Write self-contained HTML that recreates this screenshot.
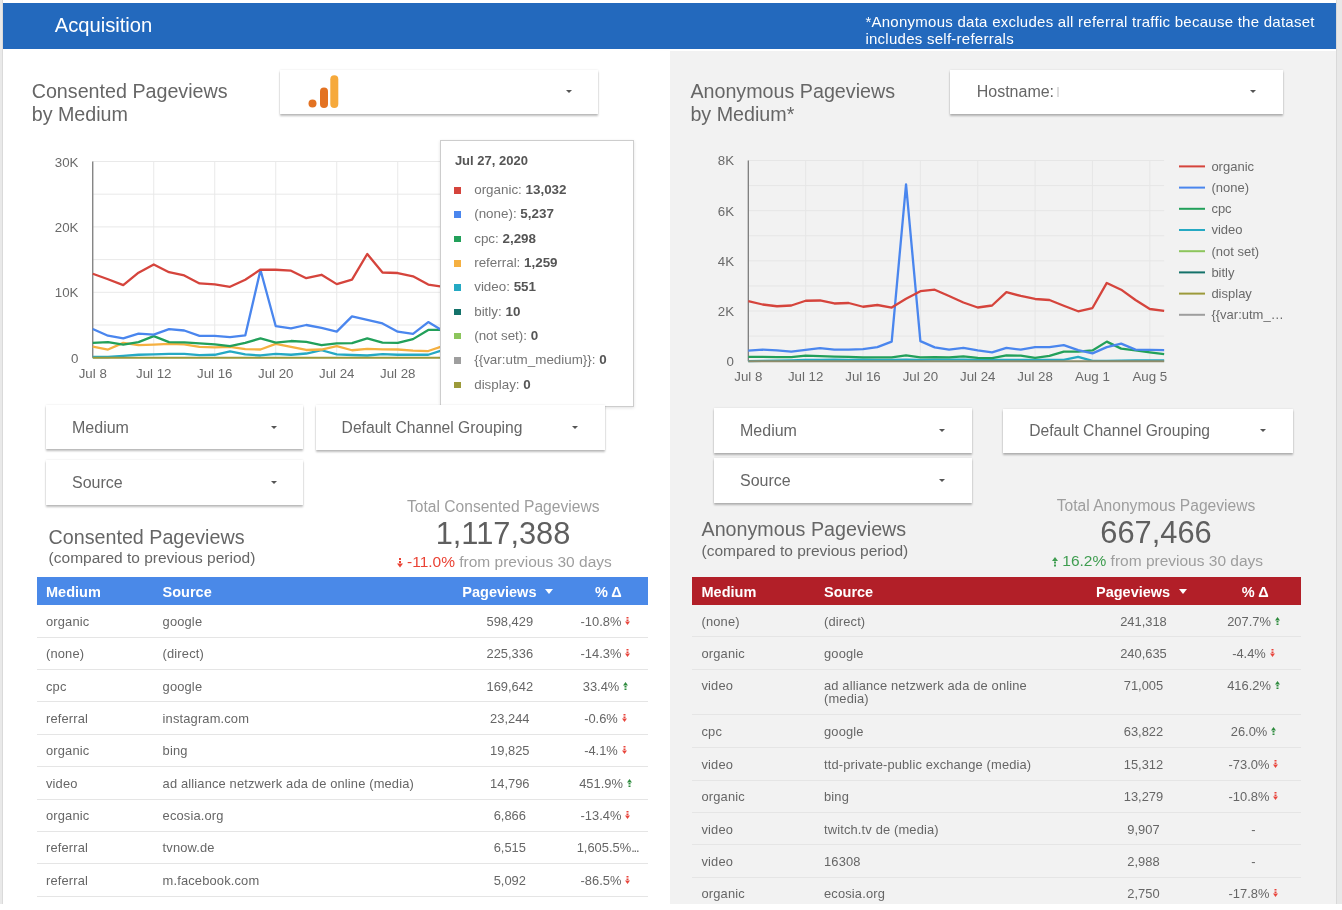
<!DOCTYPE html>
<html><head><meta charset="utf-8"><style>
*{box-sizing:border-box;margin:0;padding:0}
html,body{width:1342px;height:910px;overflow:hidden;background:#fff;font-family:"Liberation Sans",sans-serif;position:relative}
#root{position:absolute;left:0;top:0;width:1342px;height:910px;will-change:transform}
.abs{position:absolute}
.t{position:absolute;white-space:nowrap;line-height:1}
.dd{position:absolute;background:#fff;box-shadow:0 1.5px 2px rgba(0,0,0,.26),0 0 2px rgba(0,0,0,.10)}
.ddl{position:absolute;top:calc(50% + 0.7px);transform:translateY(-50%);font-size:16px;color:#666;white-space:nowrap;line-height:1}
.caret{position:absolute;width:0;height:0;border-left:3.5px solid transparent;border-right:3.5px solid transparent;border-top:3.7px solid #555}
.thead{position:absolute;height:28.7px;color:#fff;font-weight:bold;font-size:14.5px}
.thead span{position:absolute;top:8px;line-height:1;white-space:nowrap}
.hcaret{position:absolute;top:12px;width:0;height:0;border-left:4px solid transparent;border-right:4px solid transparent;border-top:5px solid #fff}
.trow{position:absolute;border-bottom:1px solid #e5e5e5}
.c{position:absolute;top:10.5px;font-size:12.9px;color:#666;line-height:1;white-space:nowrap}
.num{text-align:center}
.src{letter-spacing:0.15px}
.arr{position:absolute}
</style></head><body><div id="root">
<div class="abs" style="left:0;top:0;width:3px;height:904px;background:#e9e9e9"></div>
<div class="abs" style="left:2px;top:0;width:1px;height:904px;background:#dadada"></div>
<div class="abs" style="left:1336px;top:0;width:6px;height:904px;background:#e8e8e8"></div>
<div class="abs" style="left:1336px;top:0;width:1px;height:904px;background:#d9d9d9"></div>
<div class="abs" style="left:670px;top:51px;width:666px;height:853px;background:#f2f2f2"></div>
<div class="abs" style="left:3px;top:3px;width:1333px;height:46px;background:#2369bd"></div>
<div class="t" style="left:54.7px;top:15px;font-size:20.2px;color:#fff">Acquisition</div>
<div class="t" style="left:865.4px;top:12.7px;font-size:15px;line-height:17.7px;color:#fff;letter-spacing:0.26px">*Anonymous data excludes all referral traffic because the dataset<br>includes self-referrals</div>

<!-- LEFT -->
<div class="t" style="left:31.7px;top:80px;font-size:19.7px;line-height:23.2px;color:#666">Consented Pageviews<br>by Medium</div>
<div class="dd" style="left:280px;top:69.5px;width:318px;height:44.5px"><div class="caret" style="left:286.0px;top:20.75px"></div></div>
<svg class="abs" style="left:308px;top:74px" width="32" height="35"><circle cx="4.5" cy="29.5" r="4" fill="#e37222"/><rect x="12" y="13.5" width="8" height="20.5" rx="4" fill="#e37222"/><rect x="22.3" y="1.2" width="8" height="32.8" rx="4" fill="#f6a93b"/></svg>
<svg style="position:absolute;left:0;top:0" width="670" height="420"><g stroke="#e9e9e9" stroke-width="1"><line x1="92.75" y1="357.70" x2="535.00" y2="357.70"/><line x1="92.75" y1="325.00" x2="535.00" y2="325.00"/><line x1="92.75" y1="292.30" x2="535.00" y2="292.30"/><line x1="92.75" y1="259.60" x2="535.00" y2="259.60"/><line x1="92.75" y1="226.90" x2="535.00" y2="226.90"/><line x1="92.75" y1="194.20" x2="535.00" y2="194.20"/><line x1="92.75" y1="161.50" x2="535.00" y2="161.50"/><line x1="92.75" y1="161.50" x2="92.75" y2="357.7"/><line x1="153.75" y1="161.50" x2="153.75" y2="357.7"/><line x1="214.75" y1="161.50" x2="214.75" y2="357.7"/><line x1="275.75" y1="161.50" x2="275.75" y2="357.7"/><line x1="336.75" y1="161.50" x2="336.75" y2="357.7"/><line x1="397.75" y1="161.50" x2="397.75" y2="357.7"/><line x1="458.75" y1="161.50" x2="458.75" y2="357.7"/><line x1="519.75" y1="161.50" x2="519.75" y2="357.7"/></g><line x1="92.75" y1="161.50" x2="92.75" y2="357.7" stroke="#757575" stroke-width="1.2"/><polyline fill="none" stroke="#25a9c3" stroke-width="2.3" stroke-linejoin="round" points="92.75,356.98 108.00,356.98 123.25,355.93 138.50,354.76 153.75,354.43 169.00,353.97 184.25,353.97 199.50,355.15 214.75,354.76 230.00,351.49 245.25,354.43 260.50,355.48 275.75,353.97 291.00,354.76 306.25,353.51 321.50,350.24 336.75,354.43 352.00,355.02 367.25,355.48 382.50,354.10 397.75,354.76 413.00,354.76 428.25,354.76 443.50,349.85 458.75,352.47 474.00,353.78 489.25,354.43 504.50,354.43 519.75,354.43 535.00,354.43"/><polyline fill="none" stroke="#f5b041" stroke-width="2.3" stroke-linejoin="round" points="92.75,346.58 108.00,349.52 123.25,342.85 138.50,345.08 153.75,344.62 169.00,343.90 184.25,344.29 199.50,346.84 214.75,347.30 230.00,346.97 245.25,349.20 260.50,349.52 275.75,343.90 291.00,346.97 306.25,349.98 321.50,349.52 336.75,346.12 352.00,350.24 367.25,348.81 382.50,349.46 397.75,349.52 413.00,350.70 428.25,351.03 443.50,345.80 458.75,347.89 474.00,348.54 489.25,349.20 504.50,349.85 519.75,349.20 535.00,349.85"/><polyline fill="none" stroke="#22a05a" stroke-width="2.3" stroke-linejoin="round" points="92.75,342.85 108.00,342.07 123.25,344.62 138.50,342.07 153.75,336.12 169.00,342.07 184.25,342.40 199.50,343.31 214.75,344.29 230.00,346.12 245.25,342.85 260.50,338.41 275.75,342.53 291.00,341.02 306.25,341.81 321.50,345.08 336.75,343.31 352.00,343.12 367.25,338.41 382.50,342.66 397.75,342.85 413.00,339.13 428.25,329.90 443.50,329.90 458.75,331.54 474.00,332.85 489.25,334.81 504.50,334.16 519.75,335.46 535.00,336.77"/><polyline fill="none" stroke="#4a86ee" stroke-width="2.3" stroke-linejoin="round" points="92.75,328.99 108.00,335.73 123.25,338.41 138.50,333.63 153.75,334.68 169.00,329.19 184.25,330.49 199.50,335.86 214.75,335.86 230.00,337.16 245.25,335.40 260.50,270.06 275.75,326.18 291.00,328.27 306.25,325.00 321.50,327.94 336.75,331.67 352.00,316.37 367.25,319.77 382.50,323.43 397.75,331.67 413.00,333.89 428.25,322.06 443.50,331.21 458.75,328.27 474.00,330.23 489.25,331.54 504.50,329.58 519.75,330.89 535.00,331.54"/><polyline fill="none" stroke="#d5443c" stroke-width="2.3" stroke-linejoin="round" points="92.75,273.73 108.00,279.22 123.25,285.17 138.50,272.68 153.75,264.50 169.00,272.22 184.25,275.49 199.50,283.41 214.75,284.45 230.00,286.81 245.25,279.68 260.50,269.54 275.75,269.74 291.00,270.72 306.25,278.17 321.50,274.77 336.75,284.12 352.00,279.68 367.25,253.98 382.50,272.48 397.75,273.01 413.00,276.28 428.25,284.58 443.50,286.87 458.75,282.49 474.00,279.22 489.25,275.95 504.50,279.22 519.75,282.49 535.00,285.76"/><line x1="92.75" y1="357.7" x2="535.00" y2="357.7" stroke="#9c9a3a" stroke-width="2"/><g font-family="Liberation Sans" font-size="13.3" fill="#6a6a6a"><text x="78.5" y="166.50" text-anchor="end">30K</text><text x="78.5" y="231.90" text-anchor="end">20K</text><text x="78.5" y="297.30" text-anchor="end">10K</text><text x="78.5" y="362.70" text-anchor="end">0</text><text x="92.75" y="377.7" text-anchor="middle">Jul 8</text><text x="153.75" y="377.7" text-anchor="middle">Jul 12</text><text x="214.75" y="377.7" text-anchor="middle">Jul 16</text><text x="275.75" y="377.7" text-anchor="middle">Jul 20</text><text x="336.75" y="377.7" text-anchor="middle">Jul 24</text><text x="397.75" y="377.7" text-anchor="middle">Jul 28</text><text x="458.75" y="377.7" text-anchor="middle">Aug 1</text><text x="519.75" y="377.7" text-anchor="middle">Aug 5</text></g></svg>
<div class="abs" style="left:439.9px;top:139.6px;width:194.4px;height:267px;background:#fff;border:1px solid #cdcdcd;box-shadow:0 1px 3px rgba(0,0,0,.12)"></div>
<div class="t" style="left:454.9px;top:153.8px;font-size:13px;font-weight:bold;color:#555">Jul 27, 2020</div>
<div class="abs" style="left:454.4px;top:187.10px;width:6.5px;height:6.5px;background:#d5443c"></div><div class="t" style="left:474.2px;top:183.10px;font-size:13.4px;color:#757575">organic: <b style="color:#555">13,032</b></div><div class="abs" style="left:454.4px;top:211.40px;width:6.5px;height:6.5px;background:#4a86ee"></div><div class="t" style="left:474.2px;top:207.40px;font-size:13.4px;color:#757575">(none): <b style="color:#555">5,237</b></div><div class="abs" style="left:454.4px;top:235.70px;width:6.5px;height:6.5px;background:#22a05a"></div><div class="t" style="left:474.2px;top:231.70px;font-size:13.4px;color:#757575">cpc: <b style="color:#555">2,298</b></div><div class="abs" style="left:454.4px;top:260.00px;width:6.5px;height:6.5px;background:#f5b041"></div><div class="t" style="left:474.2px;top:256.00px;font-size:13.4px;color:#757575">referral: <b style="color:#555">1,259</b></div><div class="abs" style="left:454.4px;top:284.30px;width:6.5px;height:6.5px;background:#25a9c3"></div><div class="t" style="left:474.2px;top:280.30px;font-size:13.4px;color:#757575">video: <b style="color:#555">551</b></div><div class="abs" style="left:454.4px;top:308.60px;width:6.5px;height:6.5px;background:#14726a"></div><div class="t" style="left:474.2px;top:304.60px;font-size:13.4px;color:#757575">bitly: <b style="color:#555">10</b></div><div class="abs" style="left:454.4px;top:332.90px;width:6.5px;height:6.5px;background:#8cc55c"></div><div class="t" style="left:474.2px;top:328.90px;font-size:13.4px;color:#757575">(not set): <b style="color:#555">0</b></div><div class="abs" style="left:454.4px;top:357.20px;width:6.5px;height:6.5px;background:#9e9e9e"></div><div class="t" style="left:474.2px;top:353.20px;font-size:13.4px;color:#757575">{{var:utm_medium}}: <b style="color:#555">0</b></div><div class="abs" style="left:454.4px;top:381.50px;width:6.5px;height:6.5px;background:#9c9a3a"></div><div class="t" style="left:474.2px;top:377.50px;font-size:13.4px;color:#757575">display: <b style="color:#555">0</b></div>
<div class="dd" style="left:46px;top:405px;width:257px;height:44px"><span class="ddl" style="left:26px">Medium</span><div class="caret" style="left:224.5px;top:20.5px"></div></div>
<div class="dd" style="left:315.6px;top:405px;width:289.69999999999993px;height:44.5px"><span class="ddl" style="left:26px;font-size:15.65px">Default Channel Grouping</span><div class="caret" style="left:256.69999999999993px;top:20.75px"></div></div>
<div class="dd" style="left:46px;top:460px;width:257px;height:44.5px"><span class="ddl" style="left:26px">Source</span><div class="caret" style="left:224.5px;top:20.75px"></div></div>
<div class="t" style="left:48.6px;top:528px;font-size:19.7px;color:#666">Consented Pageviews</div>
<div class="t" style="left:48.6px;top:550px;font-size:15.5px;color:#666">(compared to previous period)</div>
<div class="t" style="left:407px;top:499px;width:190px;text-align:center;font-size:15.6px;color:#9e9e9e">Total Consented Pageviews</div>
<div class="t" style="left:403px;top:519px;width:200px;text-align:center;font-size:30.8px;color:#5f5f5f">1,117,388</div>
<div class="t" style="left:396.7px;top:553.8px;font-size:15.5px;color:#9e9e9e"><svg width="6" height="10" style="vertical-align:-1px"><rect x="2" y="0" width="2" height="2" fill="#ea4335"/><rect x="2" y="3" width="2" height="2" fill="#ea4335"/><path d="M0 5.5 L6 5.5 L3 9.5 Z" fill="#ea4335"/></svg> <span style="color:#ea4335">-11.0%</span> from previous 30 days</div>
<div class="thead" style="left:37px;top:576.6px;width:611px;background:#4a89e8"><span style="left:9px">Medium</span><span style="left:125.6px">Source</span><span style="left:425.3px">Pageviews</span><div class="hcaret" style="left:507.8px"></div><span style="left:557.9px">% &Delta;</span></div><div class="trow" style="left:37px;top:605.30px;width:611px;height:32.37px"><span class="c src" style="left:9px">organic</span><span class="c src" style="left:125.6px">google</span><span class="c num" style="left:422.8px;width:100px">598,429</span><span class="c num" style="left:518.5px;width:100px">-10.8%<svg width="5" height="9" style="vertical-align:0px;margin-left:4px"><rect x="1.5" y="0" width="2" height="1.5" fill="#e8453c"/><rect x="1.5" y="2.5" width="2" height="1.5" fill="#e8453c"/><path d="M0 4.6 L5 4.6 L2.5 8 Z" fill="#e8453c"/></svg></span></div><div class="trow" style="left:37px;top:637.67px;width:611px;height:32.37px"><span class="c src" style="left:9px">(none)</span><span class="c src" style="left:125.6px">(direct)</span><span class="c num" style="left:422.8px;width:100px">225,336</span><span class="c num" style="left:518.5px;width:100px">-14.3%<svg width="5" height="9" style="vertical-align:0px;margin-left:4px"><rect x="1.5" y="0" width="2" height="1.5" fill="#e8453c"/><rect x="1.5" y="2.5" width="2" height="1.5" fill="#e8453c"/><path d="M0 4.6 L5 4.6 L2.5 8 Z" fill="#e8453c"/></svg></span></div><div class="trow" style="left:37px;top:670.04px;width:611px;height:32.37px"><span class="c src" style="left:9px">cpc</span><span class="c src" style="left:125.6px">google</span><span class="c num" style="left:422.8px;width:100px">169,642</span><span class="c num" style="left:518.5px;width:100px">33.4%<svg width="5" height="9" style="vertical-align:0px;margin-left:4px"><path d="M2.5 0 L5 3.4 L0 3.4 Z" fill="#2e8b3e"/><rect x="1.5" y="4" width="2" height="1.5" fill="#2e8b3e"/><rect x="1.5" y="6.5" width="2" height="1.5" fill="#2e8b3e"/></svg></span></div><div class="trow" style="left:37px;top:702.41px;width:611px;height:32.37px"><span class="c src" style="left:9px">referral</span><span class="c src" style="left:125.6px">instagram.com</span><span class="c num" style="left:422.8px;width:100px">23,244</span><span class="c num" style="left:518.5px;width:100px">-0.6%<svg width="5" height="9" style="vertical-align:0px;margin-left:4px"><rect x="1.5" y="0" width="2" height="1.5" fill="#e8453c"/><rect x="1.5" y="2.5" width="2" height="1.5" fill="#e8453c"/><path d="M0 4.6 L5 4.6 L2.5 8 Z" fill="#e8453c"/></svg></span></div><div class="trow" style="left:37px;top:734.78px;width:611px;height:32.37px"><span class="c src" style="left:9px">organic</span><span class="c src" style="left:125.6px">bing</span><span class="c num" style="left:422.8px;width:100px">19,825</span><span class="c num" style="left:518.5px;width:100px">-4.1%<svg width="5" height="9" style="vertical-align:0px;margin-left:4px"><rect x="1.5" y="0" width="2" height="1.5" fill="#e8453c"/><rect x="1.5" y="2.5" width="2" height="1.5" fill="#e8453c"/><path d="M0 4.6 L5 4.6 L2.5 8 Z" fill="#e8453c"/></svg></span></div><div class="trow" style="left:37px;top:767.15px;width:611px;height:32.37px"><span class="c src" style="left:9px">video</span><span class="c src" style="left:125.6px">ad alliance netzwerk ada de online (media)</span><span class="c num" style="left:422.8px;width:100px">14,796</span><span class="c num" style="left:518.5px;width:100px">451.9%<svg width="5" height="9" style="vertical-align:0px;margin-left:4px"><path d="M2.5 0 L5 3.4 L0 3.4 Z" fill="#2e8b3e"/><rect x="1.5" y="4" width="2" height="1.5" fill="#2e8b3e"/><rect x="1.5" y="6.5" width="2" height="1.5" fill="#2e8b3e"/></svg></span></div><div class="trow" style="left:37px;top:799.52px;width:611px;height:32.37px"><span class="c src" style="left:9px">organic</span><span class="c src" style="left:125.6px">ecosia.org</span><span class="c num" style="left:422.8px;width:100px">6,866</span><span class="c num" style="left:518.5px;width:100px">-13.4%<svg width="5" height="9" style="vertical-align:0px;margin-left:4px"><rect x="1.5" y="0" width="2" height="1.5" fill="#e8453c"/><rect x="1.5" y="2.5" width="2" height="1.5" fill="#e8453c"/><path d="M0 4.6 L5 4.6 L2.5 8 Z" fill="#e8453c"/></svg></span></div><div class="trow" style="left:37px;top:831.89px;width:611px;height:32.37px"><span class="c src" style="left:9px">referral</span><span class="c src" style="left:125.6px">tvnow.de</span><span class="c num" style="left:422.8px;width:100px">6,515</span><span class="c num" style="left:520.5px;width:100px">1,605.5%<span style="letter-spacing:-1.2px">...</span></span></div><div class="trow" style="left:37px;top:864.26px;width:611px;height:32.37px"><span class="c src" style="left:9px">referral</span><span class="c src" style="left:125.6px">m.facebook.com</span><span class="c num" style="left:422.8px;width:100px">5,092</span><span class="c num" style="left:518.5px;width:100px">-86.5%<svg width="5" height="9" style="vertical-align:0px;margin-left:4px"><rect x="1.5" y="0" width="2" height="1.5" fill="#e8453c"/><rect x="1.5" y="2.5" width="2" height="1.5" fill="#e8453c"/><path d="M0 4.6 L5 4.6 L2.5 8 Z" fill="#e8453c"/></svg></span></div>

<!-- RIGHT -->
<div class="t" style="left:690.4px;top:80px;font-size:19.7px;line-height:23.2px;color:#666">Anonymous Pageviews<br>by Medium*</div>
<div class="dd" style="left:950px;top:69.5px;width:333px;height:44.5px"><span class="ddl" style="left:26.700000000000045px">Hostname:</span><div class="caret" style="left:299.79999999999995px;top:20.75px"></div></div>
<div class="abs" style="left:1057.2px;top:86.6px;width:1.5px;height:10.7px;background:#dedede"></div>
<svg style="position:absolute;left:0;top:0" width="1342" height="420"><g stroke="#e6e6e6" stroke-width="1"><line x1="748.3" y1="361.20" x2="1164.16" y2="361.20"/><line x1="748.3" y1="336.11" x2="1164.16" y2="336.11"/><line x1="748.3" y1="311.02" x2="1164.16" y2="311.02"/><line x1="748.3" y1="285.93" x2="1164.16" y2="285.93"/><line x1="748.3" y1="260.84" x2="1164.16" y2="260.84"/><line x1="748.3" y1="235.75" x2="1164.16" y2="235.75"/><line x1="748.3" y1="210.66" x2="1164.16" y2="210.66"/><line x1="748.3" y1="185.57" x2="1164.16" y2="185.57"/><line x1="748.3" y1="160.48" x2="1164.16" y2="160.48"/><line x1="748.30" y1="160.48" x2="748.30" y2="361.2"/><line x1="805.66" y1="160.48" x2="805.66" y2="361.2"/><line x1="863.02" y1="160.48" x2="863.02" y2="361.2"/><line x1="920.38" y1="160.48" x2="920.38" y2="361.2"/><line x1="977.74" y1="160.48" x2="977.74" y2="361.2"/><line x1="1035.10" y1="160.48" x2="1035.10" y2="361.2"/><line x1="1092.46" y1="160.48" x2="1092.46" y2="361.2"/><line x1="1149.82" y1="160.48" x2="1149.82" y2="361.2"/></g><line x1="748.3" y1="160.48" x2="748.3" y2="361.2" stroke="#757575" stroke-width="1.2"/><polyline fill="none" stroke="#25a9c3" stroke-width="2.3" stroke-linejoin="round" points="748.30,361.20 762.64,360.95 776.98,360.70 791.32,360.45 805.66,359.95 820.00,359.95 834.34,359.69 848.68,359.95 863.02,359.69 877.36,359.95 891.70,359.95 906.04,359.69 920.38,359.95 934.72,359.69 949.06,359.69 963.40,359.69 977.74,359.95 992.08,359.95 1006.42,359.95 1020.76,359.95 1035.10,359.95 1049.44,359.95 1063.78,359.95 1078.12,356.93 1092.46,360.95 1106.80,360.95 1121.14,360.70 1135.48,360.45 1149.82,360.45 1164.16,360.45"/><polyline fill="none" stroke="#22a05a" stroke-width="2.3" stroke-linejoin="round" points="748.30,356.93 762.64,356.93 776.98,357.19 791.32,357.19 805.66,355.68 820.00,356.18 834.34,356.68 848.68,356.93 863.02,357.44 877.36,357.44 891.70,357.44 906.04,355.43 920.38,357.44 934.72,357.19 949.06,357.44 963.40,356.43 977.74,357.94 992.08,358.19 1006.42,355.43 1020.76,355.68 1035.10,357.94 1049.44,355.93 1063.78,351.67 1078.12,351.67 1092.46,350.41 1106.80,341.63 1121.14,348.65 1135.48,350.41 1149.82,352.42 1164.16,354.17"/><polyline fill="none" stroke="#4a86ee" stroke-width="2.3" stroke-linejoin="round" points="748.30,350.66 762.64,349.66 776.98,350.41 791.32,351.67 805.66,349.91 820.00,348.15 834.34,349.66 848.68,349.66 863.02,349.16 877.36,347.15 891.70,341.63 906.04,184.32 920.38,341.13 934.72,347.40 949.06,349.66 963.40,347.90 977.74,350.41 992.08,352.42 1006.42,347.90 1020.76,349.66 1035.10,347.15 1049.44,347.15 1063.78,345.14 1078.12,350.16 1092.46,353.42 1106.80,347.15 1121.14,343.64 1135.48,349.66 1149.82,349.91 1164.16,350.16"/><polyline fill="none" stroke="#d5443c" stroke-width="2.3" stroke-linejoin="round" points="748.30,301.23 762.64,304.50 776.98,306.25 791.32,305.50 805.66,300.73 820.00,300.48 834.34,303.49 848.68,302.99 863.02,306.75 877.36,305.00 891.70,307.51 906.04,298.73 920.38,291.20 934.72,289.69 949.06,295.97 963.40,302.49 977.74,307.51 992.08,305.50 1006.42,292.20 1020.76,295.97 1035.10,298.98 1049.44,299.98 1063.78,305.75 1078.12,311.27 1092.46,308.01 1106.80,282.92 1121.14,289.69 1135.48,299.98 1149.82,309.01 1164.16,310.77"/><line x1="748.3" y1="361.2" x2="1164.16" y2="361.2" stroke="#8f8c6a" stroke-width="2"/><g font-family="Liberation Sans" font-size="13.3" fill="#6a6a6a"><text x="734" y="165.48" text-anchor="end">8K</text><text x="734" y="215.66" text-anchor="end">6K</text><text x="734" y="265.84" text-anchor="end">4K</text><text x="734" y="316.02" text-anchor="end">2K</text><text x="734" y="366.20" text-anchor="end">0</text><text x="748.30" y="381.4" text-anchor="middle">Jul 8</text><text x="805.66" y="381.4" text-anchor="middle">Jul 12</text><text x="863.02" y="381.4" text-anchor="middle">Jul 16</text><text x="920.38" y="381.4" text-anchor="middle">Jul 20</text><text x="977.74" y="381.4" text-anchor="middle">Jul 24</text><text x="1035.10" y="381.4" text-anchor="middle">Jul 28</text><text x="1092.46" y="381.4" text-anchor="middle">Aug 1</text><text x="1149.82" y="381.4" text-anchor="middle">Aug 5</text></g><line x1="1179" y1="166.40" x2="1205" y2="166.40" stroke="#d5443c" stroke-width="2"/><text x="1211.4" y="170.80" font-family="Liberation Sans" font-size="13" fill="#6a6a6a">organic</text><line x1="1179" y1="187.60" x2="1205" y2="187.60" stroke="#4a86ee" stroke-width="2"/><text x="1211.4" y="192.00" font-family="Liberation Sans" font-size="13" fill="#6a6a6a">(none)</text><line x1="1179" y1="208.80" x2="1205" y2="208.80" stroke="#22a05a" stroke-width="2"/><text x="1211.4" y="213.20" font-family="Liberation Sans" font-size="13" fill="#6a6a6a">cpc</text><line x1="1179" y1="230.00" x2="1205" y2="230.00" stroke="#25a9c3" stroke-width="2"/><text x="1211.4" y="234.40" font-family="Liberation Sans" font-size="13" fill="#6a6a6a">video</text><line x1="1179" y1="251.20" x2="1205" y2="251.20" stroke="#8cc55c" stroke-width="2"/><text x="1211.4" y="255.60" font-family="Liberation Sans" font-size="13" fill="#6a6a6a">(not set)</text><line x1="1179" y1="272.40" x2="1205" y2="272.40" stroke="#14726a" stroke-width="2"/><text x="1211.4" y="276.80" font-family="Liberation Sans" font-size="13" fill="#6a6a6a">bitly</text><line x1="1179" y1="293.60" x2="1205" y2="293.60" stroke="#9c9a3a" stroke-width="2"/><text x="1211.4" y="298.00" font-family="Liberation Sans" font-size="13" fill="#6a6a6a">display</text><line x1="1179" y1="314.80" x2="1205" y2="314.80" stroke="#9e9e9e" stroke-width="2"/><text x="1211.4" y="319.20" font-family="Liberation Sans" font-size="13" fill="#6a6a6a">{{var:utm_&hellip;</text></svg>
<div class="dd" style="left:714px;top:408px;width:258.29999999999995px;height:44.69999999999999px"><span class="ddl" style="left:26px">Medium</span><div class="caret" style="left:225.10000000000002px;top:20.849999999999994px"></div></div>
<div class="dd" style="left:1003.2px;top:408.6px;width:290.0px;height:44.099999999999966px"><span class="ddl" style="left:26px;font-size:15.65px">Default Channel Grouping</span><div class="caret" style="left:256.89999999999986px;top:20.549999999999983px"></div></div>
<div class="dd" style="left:714px;top:458.3px;width:258.29999999999995px;height:44.69999999999999px"><span class="ddl" style="left:26px">Source</span><div class="caret" style="left:225.10000000000002px;top:20.849999999999994px"></div></div>
<div class="t" style="left:701.5px;top:520px;font-size:19.7px;color:#666">Anonymous Pageviews</div>
<div class="t" style="left:701.5px;top:543px;font-size:15.5px;color:#666">(compared to previous period)</div>
<div class="t" style="left:1056px;top:498px;width:200px;text-align:center;font-size:15.6px;color:#9e9e9e">Total Anonymous Pageviews</div>
<div class="t" style="left:1056px;top:518px;width:200px;text-align:center;font-size:30.8px;color:#5f5f5f">667,466</div>
<div class="t" style="left:1052px;top:553.3px;font-size:15.5px;color:#9e9e9e"><svg width="6" height="10" style="vertical-align:-1px"><path d="M3 0 L6 4 L0 4 Z" fill="#3f9d50"/><rect x="2" y="4.5" width="2" height="2" fill="#3f9d50"/><rect x="2" y="7.5" width="2" height="2" fill="#3f9d50"/></svg> <span style="color:#3f9d50">16.2%</span> from previous 30 days</div>
<div class="thead" style="left:692px;top:576.5px;width:609px;background:#b21f28"><span style="left:9.5px">Medium</span><span style="left:132px">Source</span><span style="left:404.0px">Pageviews</span><div class="hcaret" style="left:486.5px"></div><span style="left:549.8px">% &Delta;</span></div><div class="trow" style="left:692px;top:605.20px;width:609px;height:32.30px"><span class="c src" style="left:9.5px">(none)</span><span class="c src" style="left:132px">(direct)</span><span class="c num" style="left:401.5px;width:100px">241,318</span><span class="c num" style="left:511.5px;width:100px">207.7%<svg width="5" height="9" style="vertical-align:0px;margin-left:4px"><path d="M2.5 0 L5 3.4 L0 3.4 Z" fill="#2e8b3e"/><rect x="1.5" y="4" width="2" height="1.5" fill="#2e8b3e"/><rect x="1.5" y="6.5" width="2" height="1.5" fill="#2e8b3e"/></svg></span></div><div class="trow" style="left:692px;top:637.50px;width:609px;height:32.30px"><span class="c src" style="left:9.5px">organic</span><span class="c src" style="left:132px">google</span><span class="c num" style="left:401.5px;width:100px">240,635</span><span class="c num" style="left:511.5px;width:100px">-4.4%<svg width="5" height="9" style="vertical-align:0px;margin-left:4px"><rect x="1.5" y="0" width="2" height="1.5" fill="#e8453c"/><rect x="1.5" y="2.5" width="2" height="1.5" fill="#e8453c"/><path d="M0 4.6 L5 4.6 L2.5 8 Z" fill="#e8453c"/></svg></span></div><div class="trow" style="left:692px;top:669.80px;width:609px;height:45.20px"><span class="c src" style="left:9.5px">video</span><span class="c src" style="left:132px">ad alliance netzwerk ada de online<br>(media)</span><span class="c num" style="left:401.5px;width:100px">71,005</span><span class="c num" style="left:511.5px;width:100px">416.2%<svg width="5" height="9" style="vertical-align:0px;margin-left:4px"><path d="M2.5 0 L5 3.4 L0 3.4 Z" fill="#2e8b3e"/><rect x="1.5" y="4" width="2" height="1.5" fill="#2e8b3e"/><rect x="1.5" y="6.5" width="2" height="1.5" fill="#2e8b3e"/></svg></span></div><div class="trow" style="left:692px;top:715.00px;width:609px;height:33.30px"><span class="c src" style="left:9.5px">cpc</span><span class="c src" style="left:132px">google</span><span class="c num" style="left:401.5px;width:100px">63,822</span><span class="c num" style="left:511.5px;width:100px">26.0%<svg width="5" height="9" style="vertical-align:0px;margin-left:4px"><path d="M2.5 0 L5 3.4 L0 3.4 Z" fill="#2e8b3e"/><rect x="1.5" y="4" width="2" height="1.5" fill="#2e8b3e"/><rect x="1.5" y="6.5" width="2" height="1.5" fill="#2e8b3e"/></svg></span></div><div class="trow" style="left:692px;top:748.30px;width:609px;height:32.30px"><span class="c src" style="left:9.5px">video</span><span class="c src" style="left:132px">ttd-private-public exchange (media)</span><span class="c num" style="left:401.5px;width:100px">15,312</span><span class="c num" style="left:511.5px;width:100px">-73.0%<svg width="5" height="9" style="vertical-align:0px;margin-left:4px"><rect x="1.5" y="0" width="2" height="1.5" fill="#e8453c"/><rect x="1.5" y="2.5" width="2" height="1.5" fill="#e8453c"/><path d="M0 4.6 L5 4.6 L2.5 8 Z" fill="#e8453c"/></svg></span></div><div class="trow" style="left:692px;top:780.60px;width:609px;height:32.40px"><span class="c src" style="left:9.5px">organic</span><span class="c src" style="left:132px">bing</span><span class="c num" style="left:401.5px;width:100px">13,279</span><span class="c num" style="left:511.5px;width:100px">-10.8%<svg width="5" height="9" style="vertical-align:0px;margin-left:4px"><rect x="1.5" y="0" width="2" height="1.5" fill="#e8453c"/><rect x="1.5" y="2.5" width="2" height="1.5" fill="#e8453c"/><path d="M0 4.6 L5 4.6 L2.5 8 Z" fill="#e8453c"/></svg></span></div><div class="trow" style="left:692px;top:813.00px;width:609px;height:32.30px"><span class="c src" style="left:9.5px">video</span><span class="c src" style="left:132px">twitch.tv de (media)</span><span class="c num" style="left:401.5px;width:100px">9,907</span><span class="c num" style="left:511.5px;width:100px">-</span></div><div class="trow" style="left:692px;top:845.30px;width:609px;height:32.30px"><span class="c src" style="left:9.5px">video</span><span class="c src" style="left:132px">16308</span><span class="c num" style="left:401.5px;width:100px">2,988</span><span class="c num" style="left:511.5px;width:100px">-</span></div><div class="trow" style="left:692px;top:877.60px;width:609px;height:32.30px"><span class="c src" style="left:9.5px">organic</span><span class="c src" style="left:132px">ecosia.org</span><span class="c num" style="left:401.5px;width:100px">2,750</span><span class="c num" style="left:511.5px;width:100px">-17.8%<svg width="5" height="9" style="vertical-align:0px;margin-left:4px"><rect x="1.5" y="0" width="2" height="1.5" fill="#e8453c"/><rect x="1.5" y="2.5" width="2" height="1.5" fill="#e8453c"/><path d="M0 4.6 L5 4.6 L2.5 8 Z" fill="#e8453c"/></svg></span></div>
<div class="abs" style="left:0;top:904px;width:1342px;height:6px;background:#fff"></div>
</div></body></html>
